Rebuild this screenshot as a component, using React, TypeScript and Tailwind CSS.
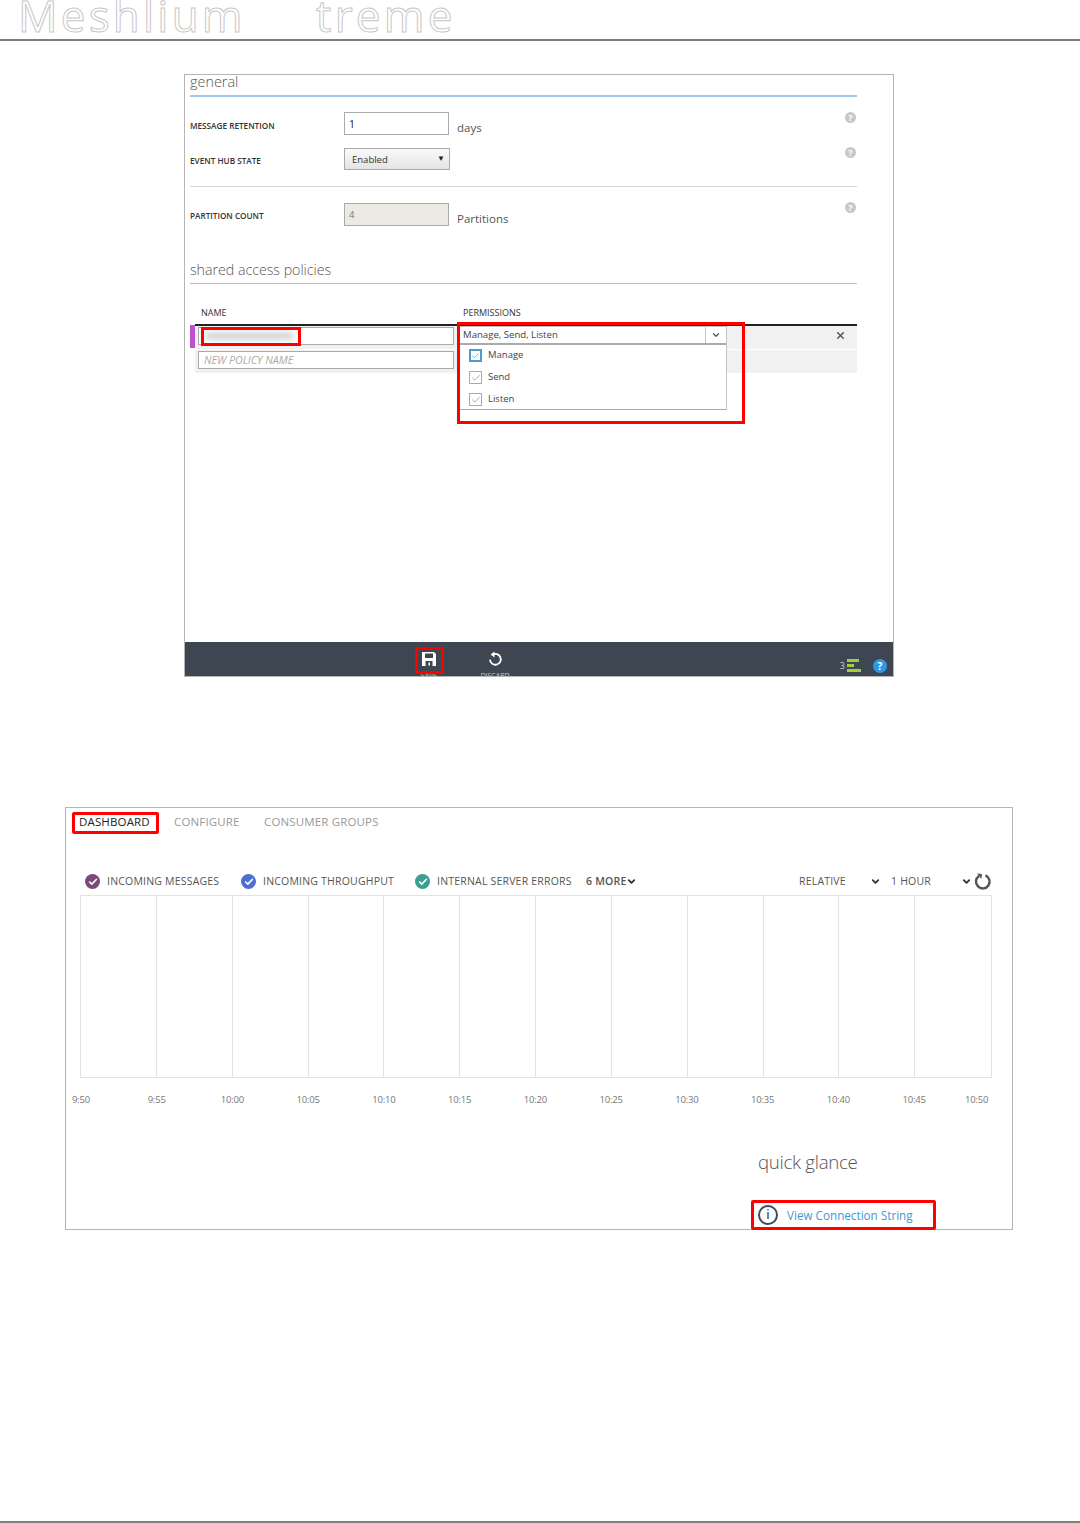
import { ChevronDown, Check, X } from "lucide-react";

const times = ["9:50", "9:55", "10:00", "10:05", "10:10", "10:15", "10:20", "10:25", "10:30", "10:35", "10:40", "10:45", "10:50"];

function Help({ className }: { className: string }) {
  return (
    <span className={"absolute right-[37px] w-[11px] h-[11px] rounded-full bg-[#c8c8c8] text-white text-[9px] leading-[11px] font-bold text-center " + className}>
      ?
    </span>
  );
}

function Perm({ label, on }: { label: string; on?: boolean }) {
  return (
    <div className="h-[22px] flex items-center pl-[9px] gap-[6px] text-[9.5px] text-[#444]">
      <span className={on ? "w-[13px] h-[13px] border-2 border-[#4f9bd0] flex items-center justify-center" : "w-[13px] h-[13px] border border-[#aaa] flex items-center justify-center"}>
        <Check size={10} className={on ? "text-[#4f9bd0]" : "text-[#999]"} />
      </span>
      {label}
    </div>
  );
}

function Metric({ color, label, width }: { color: string; label: string; width: string }) {
  return (
    <div className={"flex items-center gap-[7px] " + width}>
      <span className={"w-[15px] h-[15px] rounded-full flex items-center justify-center " + color}>
        <Check size={10} strokeWidth={4} className="text-white" />
      </span>
      <span className="text-[10.5px] tracking-[0.2px] text-[#555] whitespace-nowrap">{label}</span>
    </div>
  );
}

export default function App() {
  return (
    <div className="relative bg-white h-[1523px] overflow-hidden font-['Open_Sans',sans-serif]">
      {/* Page header */}
      <header className="h-[41px] border-b-2 border-[#7f7f7f] overflow-hidden pl-[18px] flex items-end">
        <div className="flex gap-[70px] text-[44px] leading-[50px] font-medium mb-[-1px] tracking-[3.2px] text-white [-webkit-text-stroke:1px_#c8c8c8]">
          <span>Meshlium</span>
          <span>treme</span>
        </div>
      </header>

      {/* Configure panel */}
      <section className="relative ml-[184px] mt-[33px] w-[710px] h-[603px] border border-[#b5b5b5] flex flex-col">
        <div className="flex-1 pl-[5px] pr-[36px]">
          <h2 className="h-[22px] border-b-2 border-[#a3c7e8] text-[14.4px] leading-[14px] font-light text-[#555]">general</h2>

          <div className="mt-[15px] h-[23px] flex items-center text-[#333]">
            <span className="w-[154px] text-[8.2px] font-semibold mt-[5px]">MESSAGE RETENTION</span>
            <span className="w-[105px] h-[23px] border border-[#aaa] pl-[4px] text-[10.5px] leading-[22px] text-[#222]">1</span>
            <span className="ml-[8px] mt-[9px] text-[11.5px] text-[#555]">days</span>
          </div>
          <Help className="top-[37px]" />

          <div className="mt-[13px] h-[22px] flex items-center text-[#333]">
            <span className="w-[154px] text-[8.2px] font-semibold mt-[4px]">EVENT HUB STATE</span>
            <span className="w-[106px] h-[22px] border border-[#aaa] bg-gradient-to-b from-[#fafafa] to-[#e4e4e4] pl-[7px] pr-[4px] pt-[2px] text-[9.5px] text-[#333] flex items-center justify-between">
              Enabled
              <span className="text-[8px] text-[#222] mt-[-5px]">▼</span>
            </span>
          </div>
          <Help className="top-[72px]" />

          <div className="mt-[16px] border-b border-[#d5d5d5]" />

          <div className="mt-[16px] h-[23px] flex items-center text-[#333]">
            <span className="w-[154px] text-[8.2px] font-semibold mt-[4px]">PARTITION COUNT</span>
            <span className="w-[105px] h-[23px] border border-[#aaa] bg-[#ebebe4] pl-[4px] text-[9.5px] leading-[21px] text-[#777]">4</span>
            <span className="ml-[8px] mt-[9px] text-[11.5px] text-[#555]">Partitions</span>
          </div>
          <Help className="top-[127px]" />

          <h2 className="mt-[35px] h-[23px] border-b border-[#a3c2dc] text-[14.2px] leading-[17px] font-light text-[#555]">shared access policies</h2>

          <div className="mt-[22px] flex text-[9px] text-[#333] pl-[11px]">
            <span className="w-[262px]">NAME</span>
            <span>PERMISSIONS</span>
          </div>

          <div className="relative mt-[4px] ml-[5px] border-t-2 border-[#222] bg-[#f1f1f1]">
            <div className="h-[24px] border-b border-white flex items-start pl-[3px] pt-[1px]">
              <span className="w-[256px] h-[18px] bg-white border border-[#aaa] flex items-center pl-[6px]">
                <span className="w-[88px] h-[6px] bg-[#c6c9cc] blur-[3px]" />
              </span>
              <X size={11} strokeWidth={3} className="absolute right-[11px] top-[4px] text-[#555]" />
            </div>
            <div className="h-[23px] pl-[3px] pt-[1px]">
              <span className="block w-[256px] h-[18px] bg-white border border-[#aaa] pl-[5px] text-[10.7px] leading-[16px] italic text-[#aaa]">NEW POLICY NAME</span>
            </div>
            <span className="absolute left-[-5px] top-[-1px] w-[5px] h-[23px] bg-[#c04fd0]" />

            {/* Permissions dropdown */}
            <div className="absolute left-[264px] top-0 w-[268px] h-[84px] overflow-hidden bg-white border border-[#c4c4c4] border-b-[#aaa]">
              <div className="h-[18px] border-b-2 border-[#aaa] flex items-center justify-between pl-[3px] text-[9.6px] text-[#444]">
                <span className="mt-[1px]">Manage, Send, Listen</span>
                <span className="w-[21px] h-full border-l border-[#c4c4c4] flex items-center justify-center">
                  <ChevronDown size={10} strokeWidth={3} className="text-[#555]" />
                </span>
              </div>
              <div>
                <Perm label="Manage" on />
                <Perm label="Send" />
                <Perm label="Listen" />
              </div>
            </div>
          </div>
        </div>

        {/* Bottom command bar */}
        <div className="h-[34px] bg-[#3e4651] overflow-hidden flex items-start text-[#c9ced4]">
          <div className="ml-[214px] w-[60px] flex flex-col items-center pt-[9px]">
            <svg width="16" height="16" viewBox="0 0 16 16" fill="#ffffff">
              <path d="M1 1h12l2 2v12H1z M4 2.5V7h8V2.5z M4.5 10v5h7v-5z M7.5 11.5h1.5v3H7.5z" fillRule="evenodd" />
            </svg>
            <span className="text-[7px] leading-[8px] mt-[5px]">SAVE</span>
          </div>
          <div className="ml-[6px] w-[60px] flex flex-col items-center pt-[9px]">
            <svg width="16" height="16" viewBox="0 0 16 16" fill="none" stroke="#ffffff" strokeWidth="1.8">
              <path d="M5.5 3.8A5.4 5.4 0 1 1 3 8.6" />
              <path d="M7.5 0.6L3.6 3.6 7.5 6.6z" fill="#ffffff" stroke="none" />
            </svg>
            <span className="text-[7px] leading-[8px] mt-[5px]">DISCARD</span>
          </div>
          <div className="ml-auto mr-[6px] mt-[17px] flex items-center">
            <span className="text-[9px] text-[#c9ced4] mr-[2px]">3</span>
            <span className="w-[14px] flex flex-col gap-[2px] mt-[-1px]">
              <span className="block h-[3px] w-[12px] bg-[#a2cc3a]" />
              <span className="block h-[3px] w-[7px] bg-[#a2cc3a]" />
              <span className="block h-[3px] w-[14px] bg-[#a2cc3a]" />
            </span>
            <span className="ml-[12px] w-[14px] h-[14px] rounded-full bg-[#2d98e6] text-white text-[10px] leading-[14px] font-bold text-center">?</span>
          </div>
        </div>

        {/* Red callouts */}
        <span className="absolute left-[16px] top-[252px] w-[100px] h-[19px] border-[3px] border-[#f00]" />
        <span className="absolute left-[272px] top-[247px] w-[288px] h-[102px] border-[3px] border-[#f00]" />
        <span className="absolute left-[230px] top-[572px] w-[29px] h-[27px] border-[3px] border-[#f00]" />
      </section>

      {/* Dashboard panel */}
      <section className="relative ml-[65px] mt-[130px] w-[948px] h-[423px] border border-[#b5b5b5] flex flex-col">
        <nav className="flex items-center h-[28px] pl-[13px] text-[11.5px] tracking-[0.15px] text-[#999]">
          <span className="w-[95px] text-[#222]">DASHBOARD</span>
          <span className="w-[90px]">CONFIGURE</span>
          <span>CONSUMER GROUPS</span>
        </nav>

        <div className="mt-[37px] h-[17px] flex items-center pl-[19px] pr-[20px]">
          <Metric color="bg-[#7a4a78]" label="INCOMING MESSAGES" width="w-[156px]" />
          <Metric color="bg-[#4f6fd0]" label="INCOMING THROUGHPUT" width="w-[174px]" />
          <Metric color="bg-[#3a9f93]" label="INTERNAL SERVER ERRORS" width="w-[171px]" />
          <span className="text-[10.5px] tracking-[0.2px] font-semibold text-[#555] flex items-center">
            6 MORE
            <ChevronDown size={11} strokeWidth={4} className="text-[#333]" />
          </span>
          <span className="ml-auto flex items-center text-[10.5px] tracking-[0.2px] text-[#555]">
            <span className="w-[71px]">RELATIVE</span>
            <ChevronDown size={11} strokeWidth={4} className="text-[#333]" />
            <span className="w-[80px] pl-[10px]">1 HOUR</span>
            <ChevronDown size={11} strokeWidth={4} className="text-[#333]" />
            <svg width="18" height="18" viewBox="0 0 18 18" fill="none" stroke="#555555" strokeWidth="2.4" className="ml-[2px] mt-[-2px]">
              <path d="M11.5 3.4A6.8 6.8 0 1 1 5 4" />
              <path d="M3 1.5l5 .4-.6 5z" fill="#555555" stroke="none" />
            </svg>
          </span>
        </div>

        {/* Chart grid */}
        <div className="ml-[14px] mt-[5px] w-[912px] h-[183px] grid grid-cols-12 border border-[#e3e3e3] divide-x divide-[#e3e3e3]">
          {times.slice(1).map((t) => (
            <div key={t} />
          ))}
        </div>

        <div className="ml-[-23px] mt-[15px] grid grid-cols-[repeat(12,75.75px)_auto] text-[9.5px] tracking-[-0.2px] text-[#777] text-center">
          {times.map((t, i) => (
            <span key={t} className={i === 12 ? "pl-[13px] text-left" : ""}>{t}</span>
          ))}
        </div>

        <h3 className="ml-[692px] mt-[42px] text-[18.7px] leading-[26px] font-light text-[#555] tracking-[-0.3px]">quick glance</h3>

        <div className="ml-[692px] mt-[30px] flex items-center gap-[9px] text-[11.7px] text-[#3a9ad9]">
          <span className="w-[20px] h-[20px] rounded-full border-2 border-[#3e4b5c] text-[#3e4b5c] text-[12px] leading-[16px] font-semibold text-center">i</span>
          <span className="mt-[2px]">View Connection String</span>
        </div>

        <span className="absolute left-[6px] top-[4px] w-[87px] h-[22px] border-[3px] border-[#f00] rounded-[2px]" />
        <span className="absolute left-[685px] top-[392px] w-[185px] h-[30px] border-[3px] border-[#f00] rounded-[2px]" />
      </section>

      {/* Page footer rule */}
      <footer className="absolute left-0 right-0 bottom-0 border-b-2 border-[#7f7f7f]" />
    </div>
  );
}
